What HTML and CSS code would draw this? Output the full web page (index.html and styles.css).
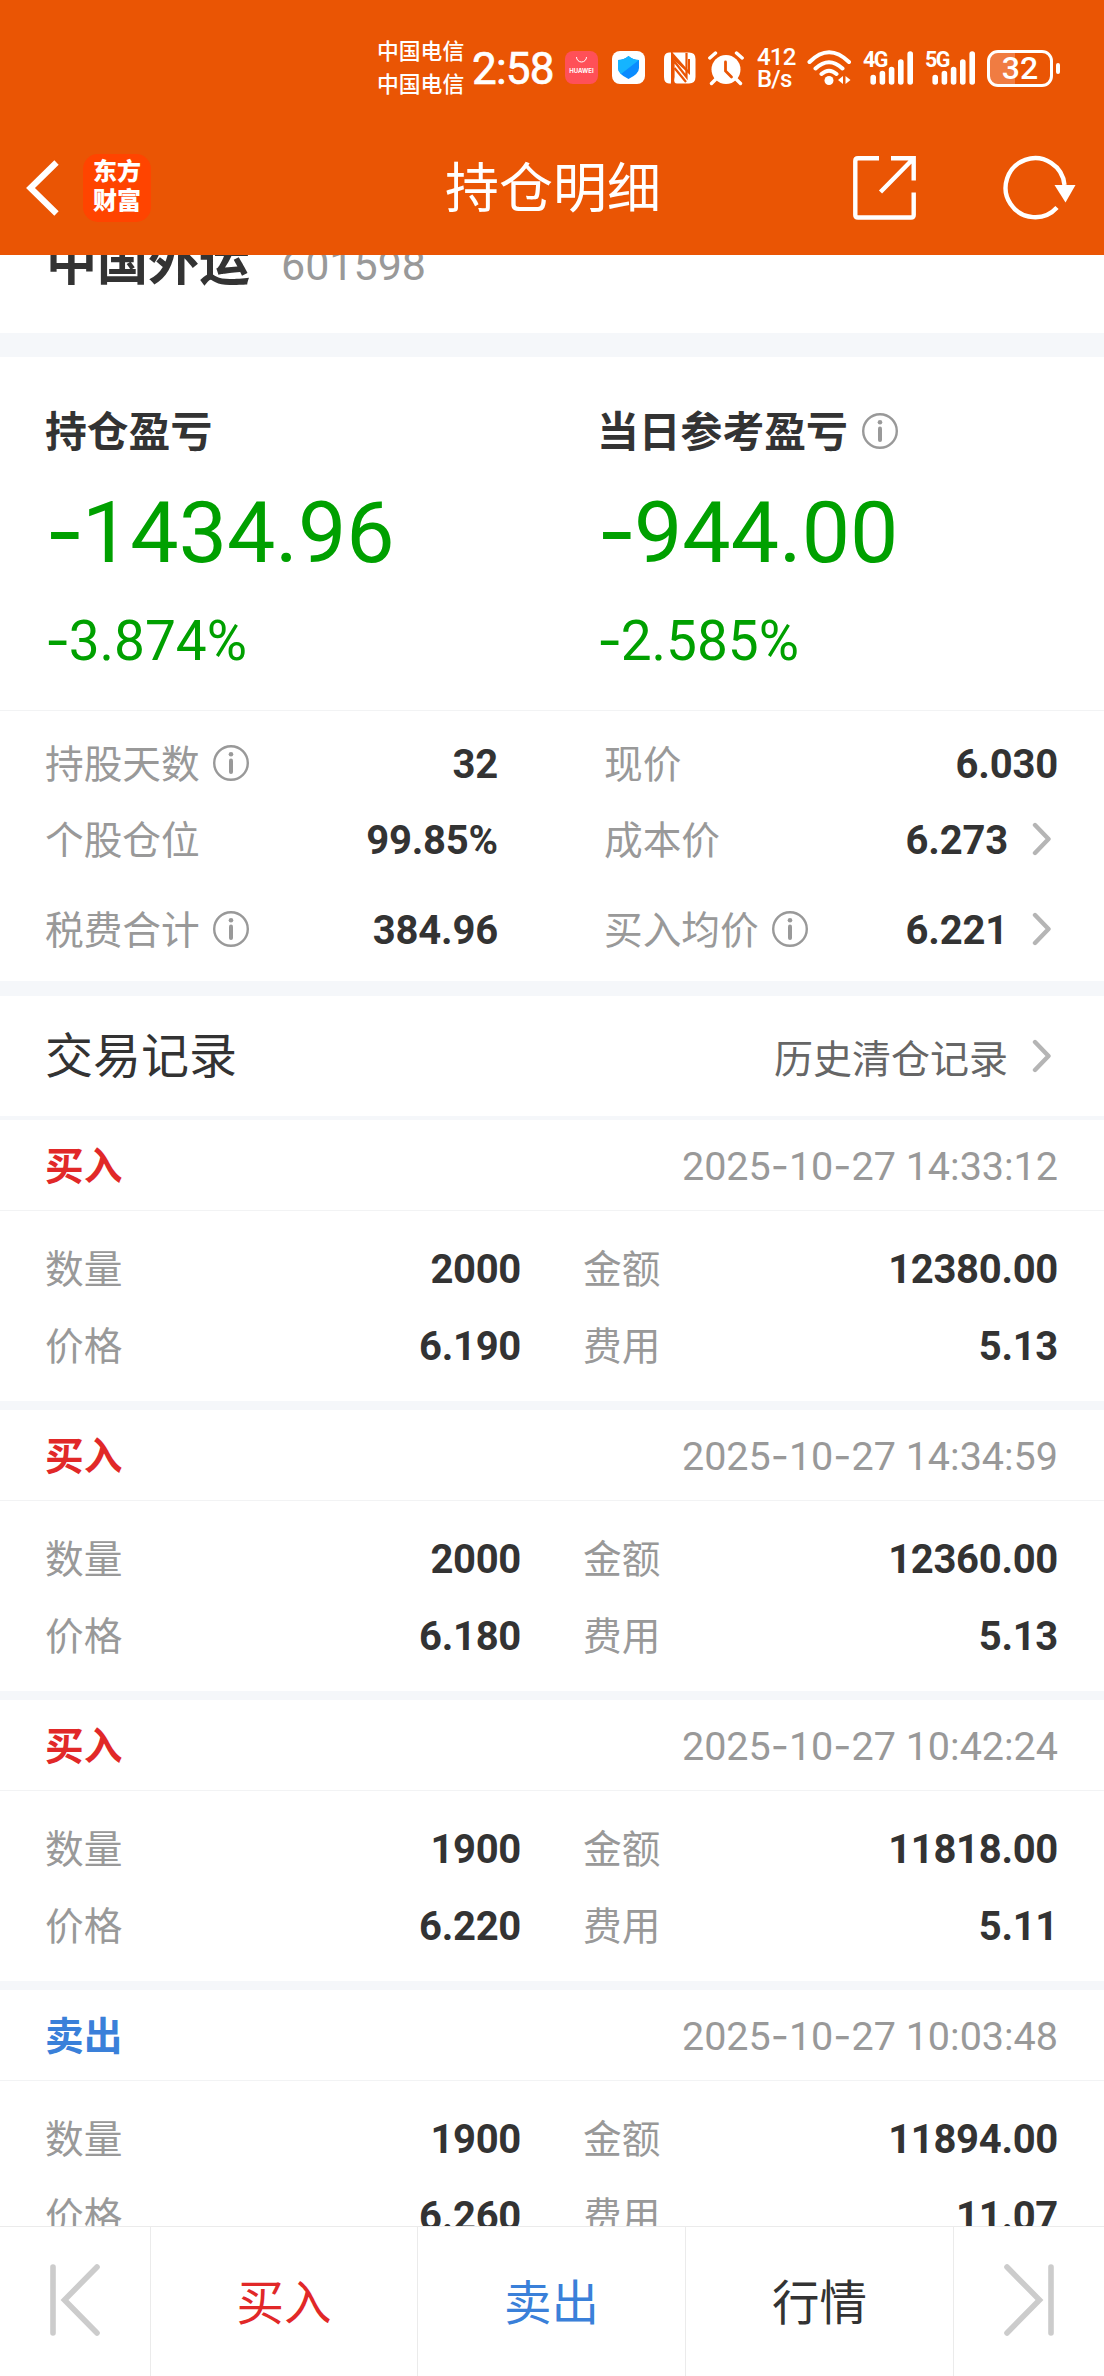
FILE: index.html
```html
<!DOCTYPE html>
<html lang="zh-CN">
<head>
<meta charset="utf-8">
<title>持仓明细</title>
<link rel="stylesheet" href="styles.css">
</head>
<body>
<svg class="defs" width="0" height="0" aria-hidden="true">
  <symbol id="info" viewBox="0 0 36 36"><circle cx="18" cy="18" r="16.8" fill="none" stroke="#999" stroke-width="2.4"/><circle cx="18" cy="9.2" r="2.3" fill="#999"/><path d="M18 15.5V27" stroke="#999" stroke-width="4" stroke-linecap="round"/></symbol>
  <symbol id="next" viewBox="0 0 20 34"><path d="M3 3L16.500 17L3 31" fill="none" stroke="#b5b5b5" stroke-width="4.400" stroke-linecap="round" stroke-linejoin="round"/></symbol>
  <symbol id="bars" viewBox="0 0 44 34"><path d="M3.200 26.500V31M12.400 22.500V31M21.600 18.500V31M30.800 11V31M40.200 3V31" stroke="#fff" stroke-width="5.600" stroke-linecap="round"/></symbol>
</svg>
<div class="screen">
  <header class="top">
    <div class="status">
      <div class="carriers"><span>中国电信</span><span>中国电信</span></div>
      <span class="clock">2:58</span>
      <svg class="app" width="34" height="34" viewBox="0 0 34 34"><rect width="33" height="33" rx="8" fill="#ff5058"/><path d="M11.500 6a5 5 0 0 0 10 0" fill="none" stroke="#fff" stroke-width="1"/><text x="16.500" y="21.500" text-anchor="middle" class="tiny">HUAWEI</text></svg>
      <svg class="shield" width="34" height="34" viewBox="0 0 34 34"><rect width="33" height="33" rx="8" fill="#fff"/><path d="M16.500 5q4.500 4 10.500 4v8q0 6-10.500 11Q6 23 6 17V9q6 0 10.500-4z" fill="#0a8cff"/><path d="M16.500 5q4.500 4 10.500 4L9 23Q6 20.500 6 17V9q6 0 10.500-4z" fill="#15b4ff"/></svg>
      <svg class="nfc" width="32" height="32" viewBox="0 0 32 32"><path d="M7 .6H5Q0 1 0 7v18q0 6 5 6.500h2V.6zM8.500.6L24 18V7h2v16L10 8v19q0 4.500 3 4.500h12q6.500 0 6.500-6.500V7Q31.500.6 25 .6z" fill="#fff"/><path d="M9.500 3v22q0 4-2 6M22.500 1V25L10 9" fill="none" stroke="#ea5504" stroke-width="2.200"/><path d="M10.500 16L22 30" stroke="#ea5504" stroke-width="2.200"/></svg>
      <svg class="alarm" width="36" height="35" viewBox="0 0 36 35"><circle cx="18" cy="18.500" r="14.500" fill="#fff"/><path d="M1.800 7L7.500 2M34.200 7L28.500 2M7.500 28.500L3.500 32.500M28.500 28.500L32.500 32.500" stroke="#fff" stroke-width="3.400" stroke-linecap="round"/><path d="M17.500 11v9l6 6" fill="none" stroke="#ea5504" stroke-width="2.800" stroke-linecap="round"/></svg>
      <div class="speed"><span>412</span><span>B/s</span></div>
      <svg class="wifi" width="46" height="36" viewBox="0 0 46 36"><path d="M2.500 12Q22 -7.500 42 12M8.500 18.500Q22 6 35.500 18.500M14.500 24Q22 17.500 29.500 24" fill="none" stroke="#fff" stroke-width="4" stroke-linecap="round"/><circle cx="22" cy="30.500" r="4.500" fill="#fff"/><path d="M36 26v8l-5-4zM38.500 26v8l5-4z" fill="#fff"/></svg>
      <div class="signal"><span>4G</span><svg width="44" height="34"><use href="#bars"/></svg></div>
      <div class="signal"><span>5G</span><svg width="44" height="34"><use href="#bars"/></svg></div>
      <div class="battery"><span>32</span></div><i class="nub"></i>
    </div>
    <nav class="nav">
      <svg class="back" width="34" height="58" viewBox="0 0 34 58"><path d="M30.500 3.500L4.500 29L30.500 54.500" fill="none" stroke="#fff" stroke-width="6.200"/></svg>
      <div class="brand"><span>东方</span><span>财富</span></div>
      <h1>持仓明细</h1>
      <svg class="share" width="64" height="64" viewBox="0 0 64 64"><path d="M26 2.300H5Q2.300 2.300 2.300 5V59Q2.300 61.500 5 61.500H58Q60.700 61.500 60.700 59V36.500M38 2.300H60.700V24.500M60 3L27.500 36" fill="none" stroke="#fff" stroke-width="4.400"/></svg>
      <svg class="refresh" width="73" height="66" viewBox="0 0 73 66"><path d="M61.500 30A29.500 29.500 0 1 0 54 52.500" fill="none" stroke="#fff" stroke-width="4.400"/><path d="M51.500 30H72.500L62.500 47.500z" fill="#fff"/></svg>
    </nav>
  </header>

  <main class="content">
    <section class="stock"><b>中国外运</b><span>601598</span></section>

    <section class="profit">
      <div><h2>持仓盈亏</h2><p class="amount"><i>-</i>1434.96</p><p class="rate"><i>-</i>3.874%</p></div>
      <div><h2>当日参考盈亏<svg width="36" height="36"><use href="#info"/></svg></h2><p class="amount"><i>-</i>944.00</p><p class="rate"><i>-</i>2.585%</p></div>
    </section>

    <section class="stats">
      <div class="stat"><label><span>持股天数</span><svg width="36" height="36"><use href="#info"/></svg></label><b>32</b></div>
      <div class="stat"><label><span>现价</span></label><b>6.030</b></div>
      <div class="stat"><label><span>个股仓位</span></label><b>99.85%</b></div>
      <div class="stat"><label><span>成本价</span></label><b>6.273</b><svg class="go" width="20" height="34"><use href="#next"/></svg></div>
      <div class="stat"><label><span>税费合计</span><svg width="36" height="36"><use href="#info"/></svg></label><b>384.96</b></div>
      <div class="stat"><label><span>买入均价</span><svg width="36" height="36"><use href="#info"/></svg></label><b>6.221</b><svg class="go" width="20" height="34"><use href="#next"/></svg></div>
    </section>

    <section class="records-head"><h3>交易记录</h3><span>历史清仓记录</span><svg class="go" width="20" height="34"><use href="#next"/></svg></section>

    <article class="record">
      <header><b class="buy">买入</b><time>2025<i>-</i>10<i>-</i>27 14:33:12</time></header>
      <dl><dt>数量</dt><dd>2000</dd><dt>金额</dt><dd>12380.00</dd><dt>价格</dt><dd>6.190</dd><dt>费用</dt><dd>5.13</dd></dl>
    </article>
    <article class="record">
      <header><b class="buy">买入</b><time>2025<i>-</i>10<i>-</i>27 14:34:59</time></header>
      <dl><dt>数量</dt><dd>2000</dd><dt>金额</dt><dd>12360.00</dd><dt>价格</dt><dd>6.180</dd><dt>费用</dt><dd>5.13</dd></dl>
    </article>
    <article class="record">
      <header><b class="buy">买入</b><time>2025<i>-</i>10<i>-</i>27 10:42:24</time></header>
      <dl><dt>数量</dt><dd>1900</dd><dt>金额</dt><dd>11818.00</dd><dt>价格</dt><dd>6.220</dd><dt>费用</dt><dd>5.11</dd></dl>
    </article>
    <article class="record">
      <header><b class="sell">卖出</b><time>2025<i>-</i>10<i>-</i>27 10:03:48</time></header>
      <dl><dt>数量</dt><dd>1900</dd><dt>金额</dt><dd>11894.00</dd><dt>价格</dt><dd>6.260</dd><dt>费用</dt><dd>11.07</dd></dl>
    </article>
  </main>

  <footer class="tabs">
    <div><svg width="52" height="74" viewBox="0 0 52 74"><path d="M4 4V70M48 4L15.500 37L48 70" fill="none" stroke="#ccc" stroke-width="5.600" stroke-linecap="round"/></svg></div>
    <div class="buy">买入</div>
    <div class="sell">卖出</div>
    <div>行情</div>
    <div><svg width="52" height="74" viewBox="0 0 52 74"><path d="M48 4V70M4 4L36.500 37L4 70" fill="none" stroke="#ccc" stroke-width="5.600" stroke-linecap="round"/></svg></div>
  </footer>
</div>
</body>
</html>
```
FILE: styles.css
```css
* { box-sizing: border-box; margin: 0; padding: 0; }
body { background: #fff; color: #333; font-family: Roboto, "Noto Sans CJK SC", sans-serif; }
i { font-style: normal; }
svg { display: block; flex: none; }
.defs { position: absolute; }
.screen { display: flex; flex-direction: column; width: 1104px; height: 2376px; overflow: hidden; }
.buy { color: #e12828; }
.sell { color: #3a80d9; }

/* Top: phone status and navigation */
.top { flex: none; height: 255px; background: #ea5504; color: #fff; }
.status { display: flex; align-items: center; height: 136px; padding-left: 377px; white-space: nowrap; }
.carriers { width: 95px; display: flex; flex-direction: column; padding-bottom: 1px; font-size: 21.800px; line-height: 33px; font-weight: 500; }
.clock { width: 93px; padding-top: 2px; font-size: 44px; line-height: 50px; font-weight: 400; letter-spacing: -.8px; -webkit-text-stroke: .7px #fff; }
.app { margin-right: 13px; }
.tiny { font: 700 6px Inter, sans-serif; fill: #fff; }
.shield { margin-right: 18px; }
.nfc { margin-right: 12px; }
.alarm { margin-right: 13px; }
.speed { display: flex; flex-direction: column; width: 50px; font-size: 24px; line-height: 22px; font-weight: 500; letter-spacing: -.8px; }
.wifi { margin-right: 10px; }
.signal { display: grid; width: 62px; }
.signal > * { grid-area: 1 / 1; }
.signal svg { margin-left: 7px; }
.signal span { font-size: 21.500px; line-height: 18px; font-weight: 700; letter-spacing: -1.500px; }
.battery { display: grid; place-items: center; width: 66px; height: 37px; border: 3px solid #fff; border-radius: 11px; background: linear-gradient(90deg, #f07c42 25px, #ea5504 25px) no-repeat; font-size: 32px; font-weight: 500; line-height: 31px; }
.nub { width: 4px; height: 11px; margin-left: 3px; border-radius: 2px; background: #fff; }
.nav { display: grid; grid-template-columns: 83px 68px 1fr 64px 84px 76px 27px; align-items: center; height: 103px; }
.back { margin-left: 26px; }
.brand { display: flex; flex-direction: column; align-items: center; justify-content: center; height: 68px; padding-bottom: 1px; border-radius: 15px; background: #f40; font-size: 24px; line-height: 29px; font-weight: 900; }
h1 { padding: 5px 0 0 102px; text-align: center; font-size: 54px; line-height: 70px; font-weight: 400; }
.refresh { grid-column: 6; margin-left: 2px; }

/* Scrolled page content */
.content { flex: 1; min-height: 0; overflow: hidden; }
.stock { display: flex; align-items: center; height: 126px; margin-top: -24px; padding: 0 46px 38px; border-bottom: 24px solid #f5f7fa; font-size: 43px; line-height: 70px; color: #999; }
.stock b { margin-right: 31px; font-size: 51px; color: #333; }
.stock span { padding-top: 3px; }
.profit { display: grid; grid-template-columns: 552px 552px; height: 354px; padding-top: 45px; border-bottom: 1px solid #f2f3f4; white-space: nowrap; }
.profit > div { padding-left: 45px; }
h2 { display: flex; align-items: center; gap: 14px; font-size: 41.800px; line-height: 62px; font-weight: 700; }
h2 svg { margin-bottom: 4px; }
.amount, .rate { color: #00a000; }
.amount { padding-top: 9px; font-size: 86px; line-height: 116px; }
.rate { font-size: 55px; line-height: 98px; }
.amount i, .rate i { display: inline-block; width: .43em; font-family: Inter, sans-serif; }
.stats { display: grid; grid-template-columns: 498px 454px; column-gap: 106px; grid-template-rows: 72px 79px 101px; height: 285px; padding: 16px 0 0; border-bottom: 15px solid #f5f7fa; }
.stat { display: flex; align-items: center; font-size: 40px; letter-spacing: -.2px; }
.stat:nth-child(odd) { padding-left: 45px; }
.stat label { display: flex; align-items: center; gap: 13px; flex: 1; font-size: 38.700px; letter-spacing: 0; color: #999; }
.stat label span { padding-bottom: 4px; }
.stat b { padding-top: 3px; }
.go { margin: 0 6px 0 24px; }
.records-head { display: flex; align-items: center; height: 124px; padding: 0 46px 0 45px; border-bottom: 4px solid #f5f7fa; font-size: 39px; color: #666; }
h3 { flex: 1; padding-bottom: 8px; font-size: 48px; font-weight: 400; color: #333; }
.record { height: 290px; border-bottom: 9px solid #f5f7fa; }
.record header { display: flex; align-items: center; justify-content: space-between; height: 91px; padding: 0 46px 0 45px; border-bottom: 1px solid #f2f3f4; font-size: 38.700px; }
.record header b { padding-bottom: 4px; }
time { padding-top: 2px; font-size: 39.500px; color: #999; }
time i { display: inline-block; width: .46em; text-align: center; font-family: Inter, sans-serif; }
dl { display: grid; grid-template-columns: 201px 275px 262px 275px; grid-auto-rows: 77px; align-items: center; padding: 19px 46px 0 45px; }
dt { padding-bottom: 6px; font-size: 38.700px; color: #999; }
dd { padding-top: 2px; font-size: 40px; font-weight: 700; letter-spacing: -.3px; text-align: right; }
dt:nth-of-type(even) { padding-left: 62px; }

/* Bottom action bar */
.tabs { flex: none; display: grid; grid-template-columns: 151px 267px 268px 268px 150px; height: 150px; border-top: 1px solid #ebebeb; background: #fff; font-size: 47.500px; }
.tabs div { display: flex; align-items: center; justify-content: center; padding-bottom: 4px; border-right: 1px solid #ebebeb; }
.tabs div:last-child { border: 0; }
```
